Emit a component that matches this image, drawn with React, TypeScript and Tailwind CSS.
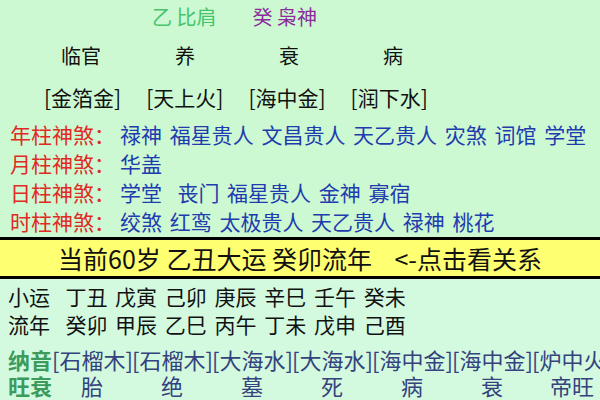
const shensha = [
  { label: '年柱神煞：', items: ['禄神', '福星贵人', '文昌贵人', '天乙贵人', '灾煞', '词馆', '学堂'] },
  { label: '月柱神煞：', items: ['华盖'] },
  { label: '日柱神煞：', items: ['学堂', '\u00a0丧门', '福星贵人', '金神', '寡宿'] },
  { label: '时柱神煞：', items: ['绞煞', '红鸾', '太极贵人', '天乙贵人', '禄神', '桃花'] },
];

const zhangsheng = ['临官', '养', '衰', '病'];
const nayinTop = ['[金箔金]', '[天上火]', '[海中金]', '[润下水]'];
const nayin = ['[石榴木]', '[石榴木]', '[大海水]', '[大海水]', '[海中金]', '[海中金]', '[炉中火]'];
const wangshuai = ['胎', '绝', '墓', '死', '病', '衰', '帝旺'];

export default function App() {
  return (
    <div className="w-[600px] h-[400px] overflow-hidden bg-[#cdf9d2] text-[#111] font-['Noto_Sans_CJK_SC','Noto_Sans',sans-serif]">
      <div className="h-[34px] flex items-center pl-[152px] text-[20px] leading-none">
        <span className="text-[#45c46d]">乙 比肩</span>
        <span className="ml-[36px] text-[#8a2c9c]">癸 枭神</span>
      </div>

      <div className="h-[44px] flex items-center pl-[29px] text-[20px] leading-none">
        {zhangsheng.map((z) => (
          <div key={z} className="w-[104px] text-center">{z}</div>
        ))}
      </div>

      <div className="h-[38px] flex items-center pl-[44px] gap-[25px] text-[21px] leading-none">
        {nayinTop.map((n, i) => (
          <span key={i}>{n}</span>
        ))}
      </div>

      <div className="pt-[4px] pl-[10px] text-[21px]">
        {shensha.map((row) => (
          <div key={row.label} className="h-[29px] flex items-center leading-none whitespace-nowrap">
            <span className="text-[#e02a24]">{row.label}</span>
            <span className="ml-[5px] text-[#1f3cae] [word-spacing:3px]">{row.items.join(' ')}</span>
          </div>
        ))}
      </div>

      <div className="mt-px h-[42px] border-y-[3px] border-black bg-[#ffff72] flex items-center justify-center text-[25px] leading-none whitespace-nowrap">
        当前60岁 乙丑大运 癸卯流年&nbsp;&nbsp;&nbsp; &lt;-点击看关系
      </div>

      <div className="bg-[#d3f9df] h-[121px] pl-[8px] pt-[3px] text-[21px] whitespace-nowrap">
        <div className="h-[28px] flex items-center leading-[28px] [word-spacing:3px]">小运&nbsp; 丁丑 戊寅 己卯 庚辰 辛巳 壬午 癸未</div>
        <div className="h-[28px] flex items-center leading-[28px] [word-spacing:3px]">流年&nbsp; 癸卯 甲辰 乙巳 丙午 丁未 戊申 己酉</div>
        <div className="mt-[8px] h-[27px] flex items-center text-[22px] leading-[27px]">
          <span className="text-[#3d9a5d] font-bold">纳音</span>
          {nayin.map((n, i) => (
            <span key={i} className="text-[#34427e] w-[80px] shrink-0">{n}</span>
          ))}
        </div>
        <div className="h-[25px] flex items-center text-[22px] leading-[25px]">
          <span className="text-[#3d9a5d] font-bold w-[44px] shrink-0">旺衰</span>
          {wangshuai.map((w, i) => (
            <span key={i} className="text-[#34427e] w-[80px] shrink-0 text-center">{w}</span>
          ))}
        </div>
      </div>
    </div>
  );
}
